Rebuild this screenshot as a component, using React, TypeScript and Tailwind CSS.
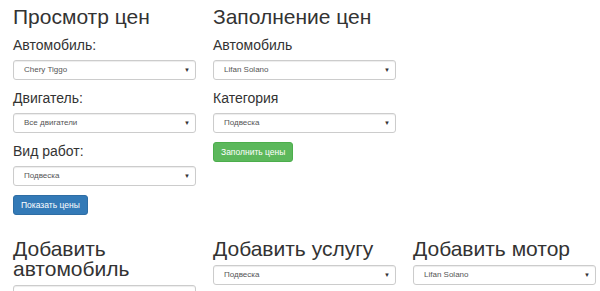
const font = { fontFamily: '"Liberation Sans", Arial, sans-serif' };

function Select({ value }: { value: string }) {
  return (
    <div className="flex h-[20px] w-full items-center justify-between rounded-[3px] border border-[#cccccc] bg-white pl-[10px] pr-[5px] text-[8px] text-[#555555] shadow-[inset_0_1px_1px_rgba(0,0,0,0.075)]">
      <span>{value}</span>
      {value && <span className="text-[6px] text-[#333]">▼</span>}
    </div>
  );
}

function Field({ label, value }: { label: string; value: string }) {
  return (
    <div className="mb-[9px]">
      <div className="mb-[5px] text-[14px] leading-[19px] text-[#333333]">{label}</div>
      <Select value={value} />
    </div>
  );
}

function Heading({ children }: { children: React.ReactNode }) {
  return <h2 className="text-[21px] leading-[20px] text-[#333333]">{children}</h2>;
}

export default function App() {
  return (
    <div className="h-[291px] w-[600px] overflow-hidden bg-white" style={font}>
      <div className="grid grid-cols-3 items-start pt-[7px]">
        <div className="pl-[13px] pr-[4px]">
          <Heading>Просмотр цен</Heading>
          <div className="mt-[9px]">
            <Field label="Автомобиль:" value="Chery Tiggo" />
            <Field label="Двигатель:" value="Все двигатели" />
            <Field label="Вид работ:" value="Подвеска" />
          </div>
          <button className="block h-[20px] rounded-[3px] border border-[#2e6da4] bg-[#337ab7] px-[7px] text-[8.5px] leading-none text-white">
            Показать цены
          </button>
        </div>
        <div className="pl-[13px] pr-[4px]">
          <Heading>Заполнение цен</Heading>
          <div className="mt-[9px]">
            <Field label="Автомобиль" value="Lifan Solano" />
            <Field label="Категория" value="Подвеска" />
          </div>
          <button className="block h-[20px] rounded-[3px] border border-[#4cae4c] bg-[#5cb85c] px-[7px] text-[8.5px] leading-none text-white">
            Заполнить цены
          </button>
        </div>
        <div />
      </div>
      <div className="mt-[24px] grid grid-cols-3 items-start">
        <div className="pl-[13px] pr-[4px]">
          <Heading>Добавить автомобиль</Heading>
          <div className="mt-[6px]">
            <Select value="" />
          </div>
        </div>
        <div className="pl-[13px] pr-[4px]">
          <Heading>Добавить услугу</Heading>
          <div className="mt-[6px]">
            <Select value="Подвеска" />
          </div>
        </div>
        <div className="pl-[13px] pr-[4px]">
          <Heading>Добавить мотор</Heading>
          <div className="mt-[6px]">
            <Select value="Lifan Solano" />
          </div>
        </div>
      </div>
    </div>
  );
}
